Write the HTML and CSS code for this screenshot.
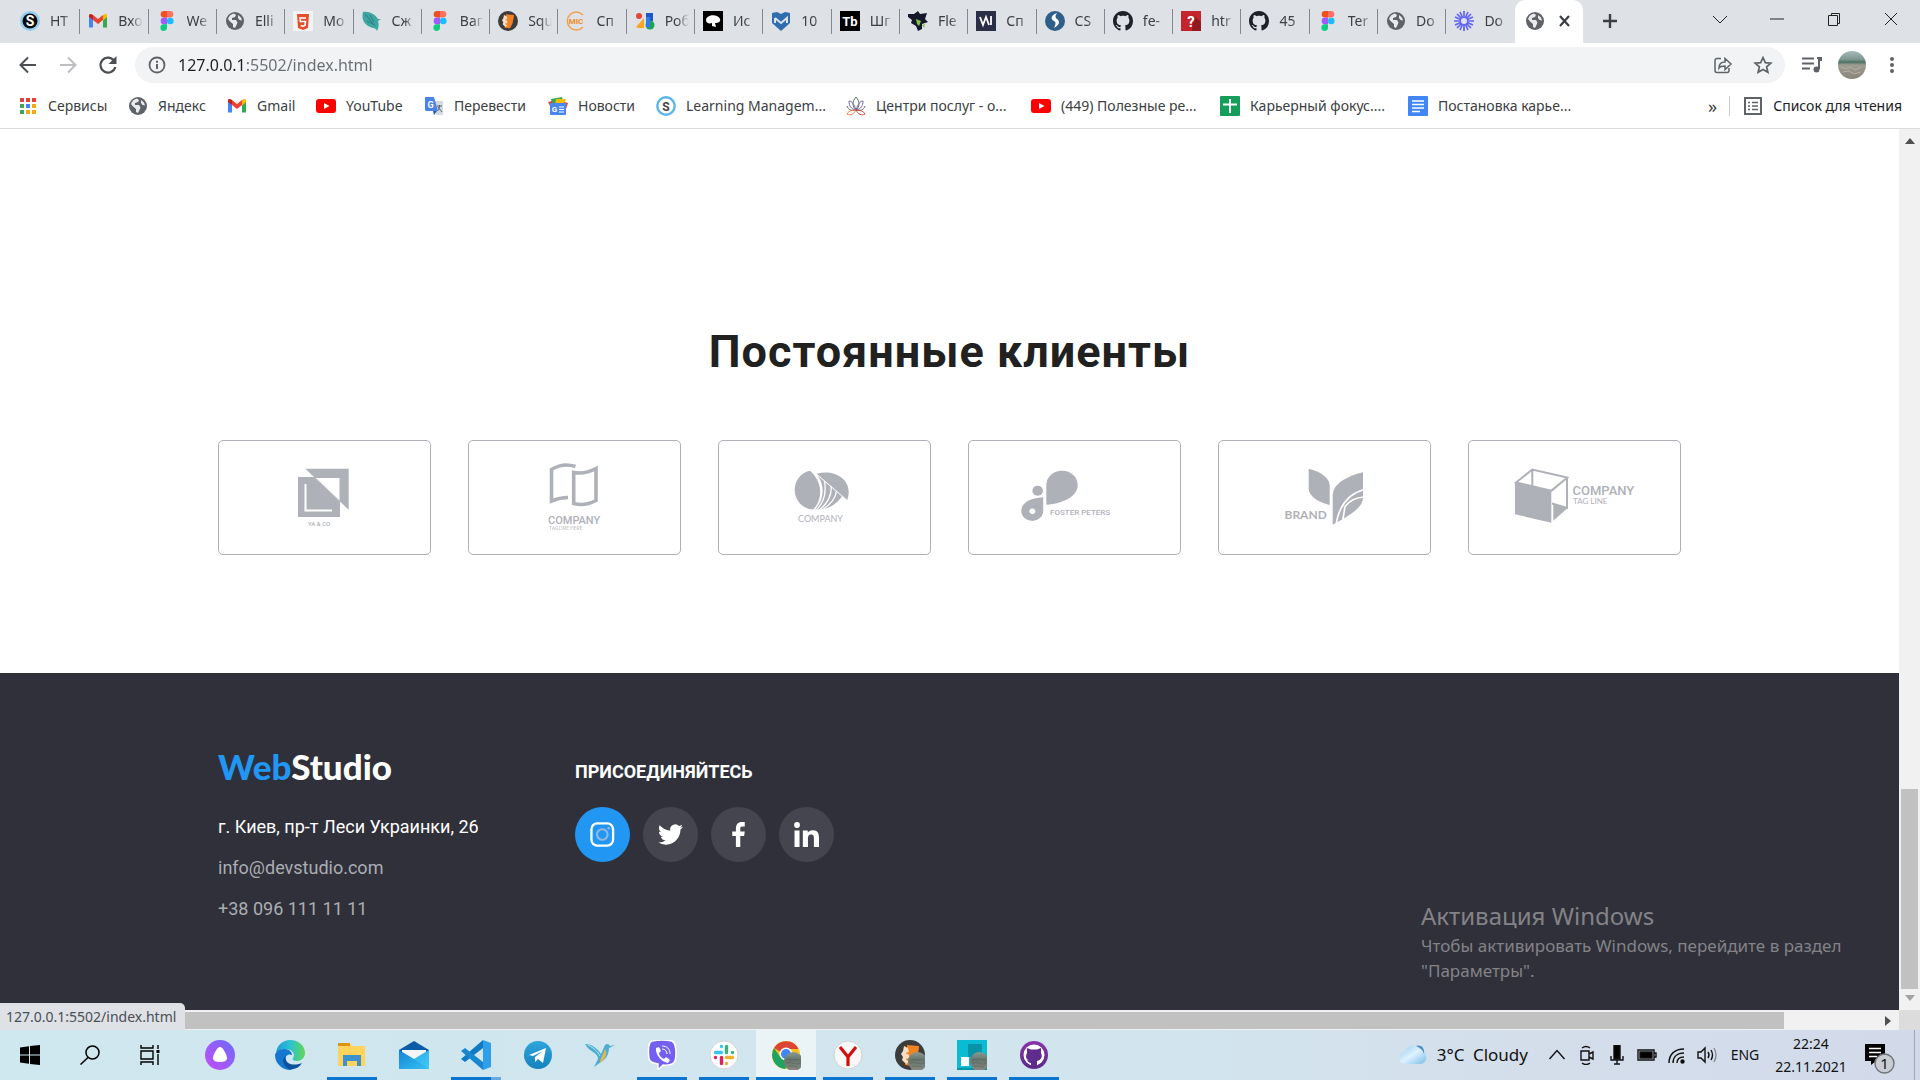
FILE: index.html
```html
<!DOCTYPE html>
<html lang="ru">
<head>
<meta charset="utf-8">
<title>WebStudio</title>
<link rel="stylesheet" href="styles.css">
</head>
<body>
<svg class="defs" aria-hidden="true">
  <defs>
    <linearGradient id="g-alice" x1="0" y1="1" x2="1" y2="0"><stop offset="0" stop-color="#c44dfb"/><stop offset="1" stop-color="#6b6bfa"/></linearGradient>
    <linearGradient id="g-edge" x1="0" y1="0" x2="1" y2="0"><stop offset="0" stop-color="#1f9bd8"/><stop offset=".5" stop-color="#2bc3d2"/><stop offset="1" stop-color="#62d84e"/></linearGradient>
    <linearGradient id="g-tg" x1="0" y1="0" x2="0" y2="1"><stop offset="0" stop-color="#2ea6dc"/><stop offset="1" stop-color="#1581bd"/></linearGradient>
    <linearGradient id="g-mail" x1="0" y1="0" x2="1" y2="1"><stop offset="0" stop-color="#1584d8"/><stop offset="1" stop-color="#35c1f1"/></linearGradient>
    <linearGradient id="g-sea" x1="0" y1="0" x2="0" y2="1"><stop offset="0" stop-color="#a9b9bb"/><stop offset=".3" stop-color="#7d9791"/><stop offset=".4" stop-color="#4d7263"/><stop offset=".5" stop-color="#a09d93"/><stop offset="1" stop-color="#888379"/></linearGradient>
    <linearGradient id="g-stone" x1="0" y1="0" x2="0" y2="1"><stop offset="0" stop-color="#8b9a94"/><stop offset=".4" stop-color="#66756c"/><stop offset="1" stop-color="#8b8981"/></linearGradient>
    <linearGradient id="g-cloud" x1="0" y1="0" x2="1" y2="1"><stop offset="0" stop-color="#8cc8ee"/><stop offset=".5" stop-color="#dff2fd"/><stop offset="1" stop-color="#73bdea"/></linearGradient>
    <linearGradient id="g-git" x1="0" y1="0" x2="0" y2="1"><stop offset="0" stop-color="#8a34ad"/><stop offset="1" stop-color="#5a2a86"/></linearGradient>
    <symbol id="globe" viewBox="0 0 20 20"><circle cx="10" cy="10" r="9" fill="#5f6368"/><path d="M3 8c1-3 3-5 6-5.5l2 1.5-1 2-3 1v2h4l1.500 2.500-1 2.500-1.500 3-2-1v-3l-3-2.500zM13 4l3 2.500 1 3-2.500-.5-1.500-2z" fill="#e8eaed"/></symbol>
    <symbol id="figma" viewBox="0 0 20 20"><path d="M7 0h3v6.600H7A3.300 3.300 0 0 1 7 0z" fill="#f24e1e"/><path d="M10 0h3a3.300 3.300 0 0 1 0 6.600h-3z" fill="#ff7262"/><path d="M7 6.600h3v6.700H7a3.300 3.300 0 0 1 0-6.700z" fill="#a259ff"/><circle cx="13.300" cy="10" r="3.300" fill="#1abcfe"/><path d="M7 13.300h3v3.300A3.300 3.300 0 1 1 7 13.300z" fill="#0acf83"/></symbol>
    <symbol id="gmail" viewBox="0 0 20 20"><path d="M1 4.500v12h4v-8z" fill="#4285f4"/><path d="M15 8.500v8h4v-12z" fill="#34a853"/><path d="M15 4.500v5l4-3.500V4.500C19 2.500 17 2.500 15 4z" fill="#fbbc04"/><path d="M5 9V4l5 4 5-4v5l-5 4z" fill="#ea4335"/><path d="M1 4.500C1 2.500 3 2.500 5 4v5L1 6z" fill="#c5221f"/></symbol>
    <symbol id="youtube" viewBox="0 0 20 20"><rect y="3" width="20" height="14" rx="3" fill="#f00"/><path d="M8 7l5.500 3L8 13z" fill="#fff"/></symbol>
    <symbol id="github" viewBox="0 0 16 16"><path d="M8 0C3.580 0 0 3.580 0 8c0 3.540 2.290 6.530 5.470 7.590.4.070.55-.17.55-.38 0-.19-.01-.82-.01-1.490-2.010.37-2.530-.49-2.690-.94-.09-.23-.48-.94-.82-1.130-.28-.15-.68-.52-.01-.53.63-.01 1.080.58 1.230.82.72 1.210 1.870.87 2.330.66.07-.52.28-.87.51-1.070-1.780-.2-3.640-.89-3.640-3.950 0-.87.31-1.590.82-2.150-.08-.2-.36-1.020.08-2.120 0 0 .67-.21 2.200.82.64-.18 1.320-.27 2-.27s1.360.09 2 .27c1.530-1.040 2.200-.82 2.200-.82.44 1.100.16 1.920.08 2.120.51.56.82 1.270.82 2.150 0 3.070-1.870 3.750-3.650 3.950.29.25.54.73.54 1.480 0 1.070-.01 1.930-.01 2.200 0 .21.15.46.55.38A8.010 8.010 0 0 0 16 8c0-4.420-3.580-8-8-8z"/></symbol>
    <symbol id="fox" viewBox="0 0 30 30"><circle cx="15" cy="15" r="15" fill="#3d3c3c"/><path d="M12 5l12 1c0 6-2 8-2 12l-4 8-8-1 2-7z" fill="#f58220"/><path d="M9 6l4 2 1 4-3 1 3 2v3l-3 1 3 3-3 2-4-4 1-3-2-3 2-3z" fill="#f8dfc4"/></symbol>
    <symbol id="photo" viewBox="0 0 20 20"><circle cx="10" cy="10" r="10" fill="url(#g-stone)"/><path d="M2 12q4-2 8 0t8-1M4 15q5-1 11 1M3 8h13" stroke="#50645a" fill="none" opacity=".6"/></symbol>
  </defs>
</svg>

<header class="browser">
  <div class="tabstrip">
    <nav class="tabs" aria-label="Вкладки">
      <button class="tab"><svg viewBox="0 0 20 20"><circle cx="10" cy="10" r="10" fill="#8fd0ef"/><circle cx="10" cy="10" r="7.500" fill="#0b0b0b"/><text x="10" y="15" class="mark" font-size="14" fill="#fff">S</text></svg><span>HT</span></button>
      <button class="tab"><svg><use href="#gmail"/></svg><span>Вхо</span></button>
      <button class="tab"><svg><use href="#figma"/></svg><span>We</span></button>
      <button class="tab"><svg><use href="#globe"/></svg><span>Elli</span></button>
      <button class="tab"><svg viewBox="0 0 20 20"><path fill="#f3f3f3" d="M0 0h20v20H0z"/><path d="M4 3h12l-1 14-5 2-5-2z" fill="#e5502c"/><path d="M13 7H7l.4 3.500h5l-.4 4-2 .7-2.300-.7" stroke="#fff" stroke-width="1.600" fill="none"/></svg><span>Мо</span></button>
      <button class="tab"><svg viewBox="0 0 20 20"><path d="M1 1c6-1 12 2 15 7l3 0-3 2c1 3 1 6-1 10-1-2-2-3-4-3C3 15-1 9 1 1z" fill="#3fa5a3"/><path d="M3 3l10 12M8 4l4 7M5 10l6 3" stroke="#2a7f80" fill="none"/></svg><span>Сж</span></button>
      <button class="tab"><svg><use href="#figma"/></svg><span>Ваг</span></button>
      <button class="tab"><svg><use href="#fox"/></svg><span>Squ</span></button>
      <button class="tab"><svg viewBox="0 0 20 20"><path d="M17 4a9 9 0 1 0 0 12" stroke="#f0a04b" fill="none" stroke-width="1.400"/><text x="10" y="13" class="mark" font-size="8" fill="#ef8d22">MIC</text></svg><span>Сп</span></button>
      <button class="tab"><svg viewBox="0 0 20 20"><circle cx="4" cy="5" r="3" fill="#e94335"/><path d="M1 16L9 7v10H3z" fill="#f6a623"/><path d="M11 2h7v8h-7z" fill="#1e56c9"/><circle cx="15" cy="14" r="4.500" fill="#22a15b"/><path d="M11 6h4v10h-4z" fill="#2b7de9"/></svg><span>Роб</span></button>
      <button class="tab"><svg viewBox="0 0 20 20"><path d="M0 0h20v20H0z"/><path d="M3 9c1-6 12-6 14-1 1 3-2 4-5 4l1 4-4-1v-3c-3 1-6 0-6-3z" fill="#fff"/></svg><span>Ис</span></button>
      <button class="tab"><svg viewBox="0 0 20 20"><path d="M1 2l5-1 4 2 4-2 5 1v10l-9 8-9-8z" fill="#2f6dae"/><path d="M4 7l6 5 6-5v5" stroke="#dee1e6" stroke-width="2" fill="none"/><path d="M4 7v5" stroke="#dee1e6" stroke-width="2"/></svg><span>10</span></button>
      <button class="tab"><svg viewBox="0 0 20 20"><path d="M0 0h20v20H0z"/><text x="10" y="15" class="mark" font-size="13" fill="#fff">Tb</text></svg><span>Шг</span></button>
      <button class="tab"><svg viewBox="0 0 20 20"><path d="M0 3l6 0 4-3 2 3 7-1-2 6 3 3-6 2 0 5-4 2-2-5-5-3 1-3-4-3z" fill="#15182b"/><path d="M8 8l5 2-2 5-2-2zM14 14l3-1-1 4z" fill="#86c440"/></svg><span>Fle</span></button>
      <button class="tab"><svg viewBox="0 0 20 20"><path d="M0 0h20v20H0z" fill="#2b2f45"/><path d="M4 6l3 8 3-8 3 8M15 5v9M10 6l3 8" stroke="#fff" stroke-width="1.800" fill="none"/></svg><span>Сп</span></button>
      <button class="tab"><svg viewBox="0 0 20 20"><circle cx="10" cy="10" r="10" fill="#2d5f88"/><path d="M12 2C6 4 5 8 9 10c2 1 2 3 0 7 6-3 6-7 3-9-2-1-2-3 0-6z" fill="#fff"/></svg><span>CS</span></button>
      <button class="tab"><svg fill="#1d2127"><use href="#github"/></svg><span>fe-</span></button>
      <button class="tab"><svg viewBox="0 0 20 20"><path d="M0 0h20v20H0z" fill="#c5242c"/><path d="M12 4l8 7v9h-9z" fill="#92191f"/><text x="10" y="16" class="mark" font-size="15" fill="#fff">?</text></svg><span>htr</span></button>
      <button class="tab"><svg fill="#1d2127"><use href="#github"/></svg><span>45</span></button>
      <button class="tab"><svg><use href="#figma"/></svg><span>Ter</span></button>
      <button class="tab"><svg><use href="#globe"/></svg><span>Do</span></button>
      <button class="tab"><svg viewBox="0 0 20 20"><path d="M10 0v20M0 10h20M3 3l14 14M17 3L3 17M6 1l8 18M14 1L6 19M1 6l18 8M1 14l18-8" stroke="#6262f0" stroke-width="1.700"/><circle cx="10" cy="10" r="3" fill="#dee1e6"/></svg><span>Do</span></button>
      <button class="tab active" aria-current="page" aria-label="Текущая вкладка"><svg><use href="#globe"/></svg><svg class="close" viewBox="0 0 20 20"><path d="M5 5l9 10M14 5L5 15" stroke="#3c4043" stroke-width="2.200"/></svg></button>
    </nav>
    <button class="newtab" aria-label="Новая вкладка"><svg viewBox="0 0 20 20"><path d="M10 3v14M3 10h14" stroke="#3c4043" stroke-width="2.400"/></svg></button>
    <div class="winbtns">
      <button aria-label="Поиск вкладок"><svg viewBox="0 0 20 20"><path d="M3 7l7 7 7-7"/></svg></button>
      <button aria-label="Свернуть"><svg viewBox="0 0 20 20"><path d="M3 10h14"/></svg></button>
      <button aria-label="Развернуть"><svg viewBox="0 0 20 20"><path d="M4.500 6.500h9v10h-9zM7.500 6V4.500h8v10H14"/></svg></button>
      <button aria-label="Закрыть"><svg viewBox="0 0 20 20"><path d="M4 4l12 12M16 4L4 16"/></svg></button>
    </div>
  </div>

  <div class="toolbar">
    <button aria-label="Назад"><svg viewBox="0 0 20 20"><path d="M18 10H3M10 2.500L2.500 10l7.500 7.500" stroke="#4b4f54" stroke-width="2" fill="none"/></svg></button>
    <button aria-label="Вперёд"><svg viewBox="0 0 20 20"><path d="M2 10h15M10 2.500l7.500 7.500-7.500 7.500" stroke="#bcbec1" stroke-width="2" fill="none"/></svg></button>
    <button aria-label="Обновить"><svg viewBox="0 0 20 20"><path d="M16 5.500A7.500 7.500 0 1 0 17.300 12" stroke="#4b4f54" stroke-width="2.200" fill="none"/><path d="M18.500 1v8h-8z" fill="#4b4f54"/></svg></button>
    <div class="omnibox">
      <svg viewBox="0 0 20 20"><circle cx="10" cy="10" r="7.500" stroke="#5f6368" stroke-width="1.800" fill="none"/><path d="M10 9v5M10 5.800v2" stroke="#5f6368" stroke-width="2"/></svg>
      <input type="text" aria-label="Адресная строка" value="127.0.0.1:5502/index.html">
      <button aria-label="Поделиться"><svg viewBox="0 0 20 20" stroke="#5f6368" stroke-width="1.500" fill="none"><path d="M8 3.500H4a2 2 0 0 0-2 2v10a2 2 0 0 0 2 2h10a2 2 0 0 0 2-2V13"/><path d="M6 13c0-4 2-6 6-6V3.500l6 5.500-6 5.500V11c-3 0-5 .5-6 2z"/></svg></button>
      <button aria-label="Добавить в закладки"><svg viewBox="0 0 20 20"><path d="M10 2.500l2.300 5.100 5.500.5-4.200 3.700 1.300 5.500-4.900-2.900-4.900 2.900 1.300-5.500L2.200 8.100l5.500-.5z" stroke="#5f6368" stroke-width="1.700" fill="none"/></svg></button>
    </div>
    <button aria-label="Управление медиа"><svg viewBox="0 0 20 20"><path d="M0 3.500h12M0 8.500h12M0 13.500h8" stroke="#5f6368" stroke-width="2"/><path d="M15 3h5v2h-3v9" fill="none" stroke="#5f6368" stroke-width="2"/><circle cx="14.500" cy="14.500" r="3" fill="#5f6368"/></svg></button>
    <button aria-label="Профиль"><svg class="avatar" viewBox="0 0 28 28"><circle cx="14" cy="14" r="14" fill="url(#g-sea)"/><path d="M3 16l5 2 4-2 5 3 6-3M5 21l6-1 5 3 7-2" stroke="#b5b0a5" fill="none"/></svg></button>
    <button aria-label="Меню"><svg viewBox="0 0 20 20" fill="#5f6368"><circle cx="10" cy="4" r="2"/><circle cx="10" cy="10" r="2"/><circle cx="10" cy="16" r="2"/></svg></button>
  </div>

  <div class="bookmarks">
    <nav class="marks" aria-label="Закладки">
      <a href="#"><svg viewBox="0 0 20 20"><path d="M2 2h4v4H2zM8 2h4v4H8zM14 2h4v4h-4z" fill="#e24236"/><path d="M2 8h4v4H2zM2 14h4v4H2z" fill="#3ba757"/><path d="M8 8h4v4H8z" fill="#4285f4"/><path d="M14 8h4v4h-4zM8 14h4v4H8zM14 14h4v4h-4z" fill="#f2a918"/></svg>Сервисы</a>
      <a href="#"><svg><use href="#globe"/></svg>Яндекс</a>
      <a href="#"><svg><use href="#gmail"/></svg>Gmail</a>
      <a href="#"><svg><use href="#youtube"/></svg>YouTube</a>
      <a href="#"><svg viewBox="0 0 20 20"><path d="M8 5h10l1 1v13h-7z" fill="#d5d8dc"/><path d="M1 1h9l4 14H2l-1-1z" fill="#4a83ec"/><path d="M13 15l-3 4-1-4z" fill="#2a56c6"/><text x="6.500" y="11.500" class="mark" font-size="9" fill="#fff">G</text><path d="M13 10h5M15.500 9v1c0 3-1 4-2 5M14 11l4 5" stroke="#5c6470" fill="none"/></svg>Перевести</a>
      <a href="#"><svg viewBox="0 0 20 20"><path d="M3 3l11-2 2 7H4z" fill="#34a853"/><path d="M8 3h10l-2 6H7z" fill="#fbbc04"/><path d="M0 6l4-1 1 5H2z" fill="#ea4335"/><path d="M16 6l4 1-2 6z" fill="#ea4335"/><rect x="2" y="7" width="16" height="12" rx="1" fill="#4a86ef"/><text x="6.500" y="16" class="mark" font-size="8" fill="#fff">G</text><path d="M11 11h5M11 13.500h5M11 16h5" stroke="#fff"/></svg>Новости</a>
      <a href="#"><svg viewBox="0 0 20 20"><circle cx="10" cy="10" r="8.700" fill="#fff" stroke="#5db5e8" stroke-width="2.400"/><text x="10" y="14.500" class="mark" font-size="12" fill="#444">S</text></svg>Learning Managem...</a>
      <a href="#"><svg viewBox="0 0 20 20" fill="none" stroke-width="1"><path d="M10 1c-4 5-4 9 0 13 4-4 4-8 0-13z" stroke="#55705d"/><path d="M3 5c0 5 2 8 7 9 5-1 7-4 7-9-3 0-5 3-7 9C8 8 6 5 3 5z" stroke="#7b68a8"/><path d="M1 10c1 4 5 5 9 4 4 1 8 0 9-4" stroke="#666"/><path d="M10 14c-3 0-8 1-9 4 4 2 7 0 9-4z" stroke="#e5803d"/><path d="M10 14c3 0 8 1 9 4-4 2-7 0-9-4z" stroke="#c94c44"/></svg>Центри послуг - о...</a>
      <a href="#"><svg><use href="#youtube"/></svg>(449) Полезные ре...</a>
      <a href="#"><svg viewBox="0 0 20 20"><rect width="20" height="20" rx="1" fill="#149e5a"/><path d="M10 3v14M3 8.500h14" stroke="#fff" stroke-width="2"/></svg>Карьерный фокус....</a>
      <a href="#"><svg viewBox="0 0 20 20"><rect width="20" height="20" rx="1" fill="#4285f4"/><path d="M4 5h12M4 8.500h12M4 12h12M4 15.500h8" stroke="#fff" stroke-width="1.700"/></svg>Постановка карье...</a>
    </nav>
    <button class="more" aria-label="Другие закладки">»</button>
    <a href="#" class="reading"><svg viewBox="0 0 20 20"><path d="M2 2h16v16H2z" fill="none" stroke="#5f6368" stroke-width="2"/><path d="M5 6.500h2M5 10h2M5 13.500h2M9 6.500h6M9 10h6M9 13.500h6" stroke="#5f6368" stroke-width="1.500"/></svg>Список для чтения</a>
  </div>
</header>

<div class="viewport">
  <div class="page">
    <main class="clients">
      <h1>Постоянные клиенты</h1>
      <ul class="cards">
        <li><a href="#" aria-label="YA &amp; CO"><svg viewBox="0 0 213 115"><path d="M80 37h42v40H80z"/><path d="M96.500 37.500H122v24z" fill="#fff"/><path d="M87.300 28.700h43.400v41z M98 38h23.500v22.400z" fill-rule="evenodd"/><path d="M87.500 44v26.500H114" stroke="#fff" stroke-width="2" fill="none"/><text x="90" y="86" font-size="6" class="r5">YA &amp; CO</text></svg></a></li>
        <li><a href="#" aria-label="Company"><svg viewBox="0 0 213 115"><path d="M107.500 26.500Q95 22.500 83.500 29.500V61Q92 57.500 100 57.500M105.700 32.500Q117 34.500 128 28.500V60.500Q117 66.500 105.700 63.500z" fill="none" stroke="#afb1b8" stroke-width="3.600"/><text x="80" y="84" font-size="11" class="r5">COMPANY</text><text x="81" y="90" font-size="5" opacity=".7" class="r5">TAGLINE HERE</text></svg></a></li>
        <li><a href="#" aria-label="Company"><svg viewBox="0 0 213 115"><path d="M92 30.700C82 33 76.700 41 76.700 50 76.700 61 85 69 95 69.500 105 60 105 42 92 30.700z"/><path d="M98.700 33.700C115 29 131 38 130.700 52c0 3-.5 5-1.400 8z"/><path d="M100 36l24 20.500C118 65 109 70.500 97 69.500 106 60 107 46 100 36z"/><path d="M98 70.500C107 62 108 50 106.500 41M100 71C111 63 114 53 113 46M102 71.500C114 64 118 56 118.500 51" fill="none" stroke="#fff" stroke-width="1.300"/><text x="80" y="81.500" font-size="9" class="lato">COMPANY</text></svg></a></li>
        <li><a href="#" aria-label="Foster Peters"><svg viewBox="0 0 213 115"><path d="M78.300 64.700V45C78.300 37 85 30.700 94 30.700s15.700 6.300 15.700 14.300C109.700 56 96 63.500 78.300 64.700z"/><ellipse cx="69.700" cy="50.700" rx="5.300" ry="5"/><path fill-rule="evenodd" d="M75.200 57.300V71a10.900 10 0 0 1-21.900 0C53.300 63 62 58 75.200 57.300zM64.300 68.500a3 2.800 0 1 0 .1 0z"/><text x="82" y="75" font-size="8" class="r5">FOSTER PETERS</text></svg></a></li>
        <li><a href="#" aria-label="Brand"><svg viewBox="0 0 213 115"><path d="M90.700 28.700c12 3 21 9 21 17V65c-12-3-21-9-21-16.500z"/><path d="M145 32.300V58c0 9-12 17-30.300 26.700V55C115 44 129 36 145 32.300z"/><path d="M118 85C121 65 130 54 146 49.500M124.500 82L127 66.500C132 60 138 57.500 146 57" fill="none" stroke="#fff" stroke-width="1.700"/><text x="66.500" y="78.700" font-size="12" class="lato bold">BRAND</text></svg></a></li>
        <li><a href="#" aria-label="Company"><svg viewBox="0 0 213 115"><path d="M47 42.300l36.300 8v32.400L47 74.300z"/><path d="M48 42.500l16.300-13 35 8-16 13.300zM64.300 30v15.500M99 38v30l-15-4.500" fill="none" stroke="#afb1b8" stroke-width="2"/><path d="M85.300 64l14.400 4-14.400 12.700z"/><text x="104.500" y="55" font-size="13" class="r5">COMPANY</text><text x="105" y="64" font-size="8" class="lato">TAG LINE</text></svg></a></li>
      </ul>
    </main>
    <footer class="footer">
      <div class="contacts">
        <a href="#" class="logo"><span>Web</span>Studio</a>
        <address>
          <p>г. Киев, пр-т Леси Украинки, 26</p>
          <a href="mailto:info@devstudio.com">info@devstudio.com</a>
          <a href="tel:+380961111111">+38 096 111 11 11</a>
        </address>
      </div>
      <div class="join">
        <h2>ПРИСОЕДИНЯЙТЕСЬ</h2>
        <ul class="social">
          <li><a href="#" class="on" aria-label="Instagram"><svg viewBox="0 0 26 26" fill="none"><rect x="1.500" y="1.500" width="22.500" height="23" rx="6" stroke="#fff" stroke-width="2.400"/><circle cx="12.800" cy="13" r="5.500" stroke="#94b9dc" stroke-width="2.200"/><circle cx="19.500" cy="6.500" r="1.400" fill="#94b9dc"/></svg></a></li>
          <li><a href="#" aria-label="Twitter"><svg viewBox="0 0 24 24" fill="#fff"><path d="M23.950 4.570a10 10 0 0 1-2.820.77 4.960 4.960 0 0 0 2.160-2.720c-.95.550-2 .95-3.130 1.180a4.920 4.920 0 0 0-8.380 4.480C7.690 8.090 4.070 6.130 1.640 3.160a4.820 4.820 0 0 0-.67 2.480c0 1.710.87 3.210 2.190 4.100a4.900 4.900 0 0 1-2.230-.62v.06a4.920 4.920 0 0 0 3.950 4.830 5 5 0 0 1-2.210.08 4.940 4.940 0 0 0 4.600 3.420A9.870 9.870 0 0 1 0 19.540a14 14 0 0 0 7.550 2.210c9.050 0 14-7.500 14-13.980 0-.21 0-.42-.02-.63.960-.69 1.800-1.560 2.460-2.550z"/></svg></a></li>
          <li><a href="#" aria-label="Facebook"><svg viewBox="0 0 24 24" fill="#fff"><path d="M9.500 24V13.500H6V9.200h3.500V6.500C9.500 2.500 11.500 0 15.300 0H18v4.200h-2.300c-1.600 0-2 .8-2 2.200v2.800H18l-.6 4.300h-3.700V24z"/></svg></a></li>
          <li><a href="#" aria-label="LinkedIn"><svg viewBox="0 0 24 24" fill="#fff"><path d="M.5 8.200h4.800V24H.5zM8.500 8.200h4.700v2.200c.8-1.500 2.500-2.600 4.900-2.600 4.800 0 5.900 3 5.900 7.500V24h-4.900v-7.700c0-1.900-.1-4.200-2.600-4.200-2.600 0-3.100 2-3.100 4.100V24H8.500z"/><circle cx="2.900" cy="2.900" r="2.800"/></svg></a></li>
        </ul>
      </div>
    </footer>
  </div>
  <div class="vscroll"><svg viewBox="0 0 10 6"><path d="M0 6l5-6 5 6z" fill="#505050"/></svg><div class="thumb"></div><svg viewBox="0 0 10 6"><path d="M0 0l5 6 5-6z" fill="#a3a3a3"/></svg></div>
  <div class="hscroll"><div class="thumb"></div><svg viewBox="0 0 6 10"><path d="M0 0l6 5-6 5z" fill="#505050"/></svg></div>
  <div class="corner"></div>
  <div class="status">127.0.0.1:5502/index.html</div>
  <aside class="activation"><strong>Активация Windows</strong><p>Чтобы активировать Windows, перейдите в раздел "Параметры".</p></aside>
</div>

<div class="taskbar">
  <nav class="apps" aria-label="Панель задач">
    <button aria-label="Пуск"><svg class="i20" viewBox="0 0 20 20"><path d="M0 2.500l9-1.300v8.300H0zM10 1l10-1v9.500H10zM0 10.500h9v8.300l-9-1.300zM10 10.500h10V20l-10-1z"/></svg></button>
    <button aria-label="Поиск"><svg class="i20" viewBox="0 0 20 20" fill="none" stroke="#000" stroke-width="1.500"><circle cx="12.500" cy="7.500" r="6.500"/><path d="M8 12.500L.5 19.500"/></svg></button>
    <button aria-label="Просмотр задач"><svg class="i20" viewBox="0 0 20 20" fill="none" stroke="#000" stroke-width="1.400"><path d="M1 0v3h12V0M1 20v-3h12v3M1 6h12v8H1zM18 0v4M18 9v11"/><path d="M16.500 5h3v3h-3z" fill="#000" stroke="none"/></svg></button>
    <button class="apart" aria-label="Алиса"><svg viewBox="0 0 30 30"><circle cx="15" cy="15" r="15" fill="url(#g-alice)"/><path d="M15 7c3 0 7 8 7 11s-3 4-7 4-7-1-7-4 4-11 7-11z" fill="#fff"/></svg></button>
    <button class="apart" aria-label="Microsoft Edge"><svg viewBox="0 0 30 30"><path d="M1 13C2 5 8 0 15 0c9 0 15 6 15 13 0 5-4 8-8 8-3 0-5-1-4-3 3-5-2-9-7-9C6 9 3 11 1 13z" fill="url(#g-edge)"/><path d="M0 15c1-4 5-6 10-6 4 0 7 3 7 6-4-2-8 2-7 6 1 5 4 8 8 9C8 31 0 24 0 15z" fill="#1577cf"/><path d="M11 16c-2 7 6 11 16 7-3 5-8 7-13 6-6-3-8-10-3-13z" fill="#0c519b"/></svg></button>
    <button class="open" aria-label="Проводник"><svg viewBox="0 0 30 30"><path d="M1 3h12l2 3h13v20H1z" fill="#ffd45c"/><path d="M1 3h12v3H1z" fill="#d9950f"/><path d="M6 15h18v11h-4v-5H10v5H6z" fill="#3f90cf"/></svg></button>
    <button aria-label="Почта"><svg viewBox="0 0 30 30"><path d="M0 10L15 1l15 9v6H0z" fill="#0b5da8"/><path d="M3 10h24v10H3z" fill="#f3f6f8"/><path d="M0 10l15 9 15-9v19H0z" fill="url(#g-mail)"/><path d="M15 19l15-9v19z" fill="#50d9ff" opacity=".35"/></svg></button>
    <button class="open more-windows" aria-label="Visual Studio Code"><svg viewBox="0 0 30 30"><path d="M22 0l8 3v24l-8 3z" fill="#2f9fea"/><path d="M22 0v8L4 22l-4-3z" fill="#0f79c4"/><path d="M22 30v-8L4 8l-4 3z" fill="#1787d0"/></svg></button>
    <button aria-label="Telegram"><svg viewBox="0 0 30 30"><circle cx="15" cy="15" r="14" fill="url(#g-tg)"/><path d="M6 15l17-7-3 15-5-4-3 3v-5l8-6-10 5z" fill="#fff"/></svg></button>
    <button aria-label="Колибри"><svg viewBox="0 0 30 30"><path d="M0 4c7 0 13 5 16 10l4-9c2-2 4-1 5 1l5-1-6 3c0 7-4 12-8 14l-7 5 4-8c0-7-8-6-13-15z" fill="#4badd2"/><path d="M20 9c3 4 0 11-5 14 0-4 3-8 5-14z" fill="#e5b84f"/><path d="M3 5c6 3 10 7 12 11" stroke="#b7e3ec" fill="none"/></svg></button>
    <button class="open" aria-label="Viber"><svg viewBox="0 0 30 30"><path d="M5 1q10-2 20 0 4 2 4 12t-4 11q-5 2-9 1l-5 5v-6q-8-1-9-5-2-16 3-18z" fill="#7360f2" stroke="#fff" stroke-width="1.500"/><path d="M9 8l3-1 2 4-2 2c0 3 3 5 5 6l2-2 4 3-2 3C15 22 8 15 9 8z" fill="#fff"/><path d="M15 6c5 0 8 3 8 8M15 9c3 0 5 2 5 5" stroke="#fff" fill="none"/></svg></button>
    <button class="open" aria-label="Slack"><svg viewBox="0 0 30 30"><circle cx="15" cy="15" r="14" fill="#fff" stroke="#d4d4d4"/><g fill="none" stroke-width="3.400" stroke-linecap="round"><path d="M12.500 6.500v0M6.500 12.500h6" stroke="#36c5f0"/><path d="M17.500 6.500v6M23.500 12.500v0" stroke="#2eb67d"/><path d="M17.500 17.500h6M17.500 23.500v0" stroke="#ecb22e"/><path d="M12.500 17.500v6M6.500 17.500v0" stroke="#e01e5a"/></g></svg></button>
    <button class="open current" aria-label="Google Chrome"><svg viewBox="0 0 30 30"><circle cx="15" cy="15" r="14" fill="#fbc116"/><path d="M15 15L3 8a14 14 0 0 1 24.500 1H15z" fill="#dc4437"/><path d="M3 8a14 14 0 0 0 11 21l5-10-9-1z" fill="#1ea362"/><circle cx="15" cy="14" r="6.500" fill="#fff"/><circle cx="15" cy="14" r="5" fill="#4285f4"/><use href="#photo" x="13" y="12" width="19" height="19"/></svg></button>
    <button class="open" aria-label="Яндекс Браузер"><svg viewBox="0 0 30 30"><circle cx="15" cy="15" r="14" fill="#f8f8f8" stroke="#d2d2d2"/><path d="M7 7l8 10 8-10M15 16v10" stroke="#d40d0d" stroke-width="3.200" fill="none"/></svg></button>
    <button class="open" aria-label="Squoosh"><svg viewBox="0 0 30 30"><use href="#fox"/><use href="#photo" x="13" y="12" width="19" height="19"/></svg></button>
    <button class="open" aria-label="PerfectPixel"><svg viewBox="0 0 30 30"><path d="M0 0h30v30H0z" fill="#09bcd4"/><path d="M11 4h14v13H11zM0 28h30v2H0z" fill="#0794a8"/><path d="M4 17h8v9H4z" fill="#fff"/><use href="#photo" x="13" y="12" width="19" height="19"/></svg></button>
    <button class="open" aria-label="GitHub Desktop"><svg viewBox="0 0 30 30"><circle cx="15" cy="15" r="14" fill="url(#g-git)"/><circle cx="15" cy="15" r="10.500" fill="#fff"/><path d="M8 8l4 1.500h6L22 8v5c2 4 0 7-4 8v5h-6v-3c-2 0-3-1-4-3l4 1c-5-1-6-4-4-8z" fill="#5f2b8c"/></svg></button>
  </nav>
  <div class="tray">
    <button class="weather"><svg viewBox="0 0 28 20"><path d="M6 19a6 6 0 0 1 0-12C8 0 15-1 18 2c5-2 9 2 8 6 3 4 1 10-4 11z" fill="url(#g-cloud)"/><path d="M17 1c5-2 9 2 8 8-1-4-4-6-8-8z" fill="#4a8fc9"/></svg>3°C&ensp;Cloudy</button>
    <button aria-label="Скрытые значки"><svg viewBox="0 0 20 20"><path d="M2.500 14L10 5.500l7.500 8.500"/></svg></button>
    <button aria-label="Камера"><svg viewBox="0 0 20 20"><path d="M4 6h8v9H4zM12 9l4-2v7l-4-2M5 3q4-3 8 0M5 18q4 3 8 0"/></svg></button>
    <button aria-label="Микрофон"><svg viewBox="0 0 20 20"><path d="M7 0h6v14H7z" fill="#000"/><path d="M4 11v4h12v-4M10 15v4M7 19h6"/></svg></button>
    <button aria-label="Батарея"><svg viewBox="0 0 20 20"><path d="M1 5h16v10H1zM17 8h2v4h-2"/><path d="M3 7h12v6H3z" fill="#000"/></svg></button>
    <button aria-label="Сеть"><svg viewBox="0 0 20 20"><path d="M2 18C2 9 8 4 17 4M6 18c0-6 4-10 11-10M10 18c0-4 3-6 7-6" /><circle cx="15.500" cy="16.500" r="1.500" fill="#000"/></svg></button>
    <button aria-label="Громкость"><svg viewBox="0 0 20 20"><path d="M1 7h3l4-4v14l-4-4H1zM11 7q2 3 0 6M14 5q3 5 0 10"/><path d="M17 3q4 7 0 14" opacity=".4"/></svg></button>
    <button class="lang">ENG</button>
    <time datetime="2021-11-22T22:24">22:24<br>22.11.2021</time>
    <button class="notes" aria-label="Уведомления"><svg viewBox="0 0 30 30"><path d="M0 0h20v17h-9l-5 4v-4H0z" fill="#000" stroke="none"/><path d="M4 4.500h12M4 8.500h12M4 12.500h8" stroke="#fff" stroke-width="1.500"/><circle cx="19.500" cy="19.500" r="9.500" fill="#c9ccd2" stroke="#6f7276"/><text x="19.500" y="25" class="count" font-size="15">1</text></svg></button>
  </div>
</div>
</body>
</html>
```
FILE: styles.css
```css
* { box-sizing: border-box; }
body {
  margin: 0;
  min-height: 100vh;
  display: flex;
  flex-direction: column;
  background: #fff;
  font: 14px/20px "Noto Sans", "Open Sans", sans-serif;
  color: #3c4043;
}
button { border: 0; padding: 0; background: none; font: inherit; color: inherit; display: flex; align-items: center; justify-content: center; }
a { color: inherit; text-decoration: none; }
ul { list-style: none; margin: 0; padding: 0; }
p { margin: 0; }
svg { display: block; width: 20px; height: 20px; flex: none; }
.defs { position: absolute; width: 0; height: 0; }
.mark { font-family: Roboto, sans-serif; font-weight: 700; text-anchor: middle; }

/* Tab strip */
.tabstrip { display: flex; height: 43px; padding-left: 12px; background: #dee1e6; }
.tabs { flex: 1; display: grid; grid-template-columns: repeat(23, minmax(0, 1fr)); }
.tab { justify-content: flex-start; gap: 10px; padding: 0 6px 2px 8px; overflow: hidden; background: linear-gradient(#85888c, #85888c) right 9px / 1px 25px no-repeat; }
.tab:nth-last-child(2) { background: none; }
.tab span { flex: 1; min-width: 0; overflow: hidden; white-space: nowrap; text-align: left; mask-image: linear-gradient(90deg, #000 50%, transparent); }
.tab.active { background: #fff; border-radius: 10px 10px 0 0; padding: 0 10px 2px; }
.newtab { width: 54px; padding-bottom: 2px; }
.winbtns { display: flex; width: 283px; padding: 0 1px 6px 54px; }
.winbtns button { flex: 1; }
.winbtns svg { fill: none; stroke: #222; }

/* Toolbar */
.toolbar { display: flex; align-items: center; height: 44px; padding: 0 8px; }
.toolbar > button { width: 40px; height: 40px; }
.omnibox { flex: 1; display: flex; align-items: center; height: 36px; margin: 0 7px; padding: 0 12px; border-radius: 18px; background: #f1f3f4; }
.omnibox input {
  flex: 1;
  min-width: 0;
  margin-left: 11px;
  padding: 0;
  border: 0;
  font: 16px/24px "Noto Sans", "Open Sans", sans-serif;
  color: transparent;
  background: linear-gradient(90deg, #202124 69px, #6a6e73 69px);
  background-clip: text;
}
.omnibox button { width: 20px; margin-left: 20px; }
.toolbar .avatar { width: 28px; height: 28px; }

/* Bookmarks */
.bookmarks { display: flex; align-items: center; height: 42px; padding: 0 18px 4px; border-bottom: 1px solid #dadce0; white-space: nowrap; }
.bookmarks a { display: flex; align-items: center; gap: 10px; }
.marks { flex: 1; display: grid; grid-template-columns: 110px 99px 89px 108px 124px 108px 190px 185px 189px 188px 1fr; }
.more { padding: 0 12px; font-size: 18px; }
.reading { padding-left: 13px; border-left: 1px solid #c8cacd; color: #202124; }

/* Browser window */
.viewport { flex: 1; position: relative; display: grid; grid-template-columns: minmax(0, 1fr) 21px; grid-template-rows: 1fr 20px; }
.page { display: flex; flex-direction: column; font-family: Roboto, sans-serif; }
.clients { padding: 196px 218px 118px; }
.clients h1 { margin: 0 0 62px; font-size: 45px; line-height: 53px; letter-spacing: 1px; text-align: center; color: #212121; }
.cards { display: grid; grid-template-columns: repeat(6, minmax(0, 1fr)); gap: 37px; }
.cards a { display: flex; justify-content: center; align-items: center; height: 115px; border: 1px solid #afb1b8; border-radius: 5px; overflow: hidden; }
.cards svg { width: 213px; height: 115px; fill: #afb1b8; }
.r5 { font-family: Roboto, sans-serif; font-weight: 500; }
.lato { font-family: Lato, sans-serif; }
.bold { font-weight: 700; }

.footer { flex: 1; display: grid; grid-template-columns: 357px 1fr; padding: 71px 218px 0; background: #2f303a; color: #fff; }
.logo { display: block; font: 900 35px/44px Lato, sans-serif; }
.logo span { color: #2196f3; }
address { display: flex; flex-direction: column; gap: 21px; margin-top: 29px; font-style: normal; font-size: 18px; line-height: 20px; }
address a { color: #acadb1; }
.join { padding-top: 18px; }
.join h2 { margin: 0 0 25px; font-size: 18px; line-height: 20px; }
.social { display: flex; gap: 13px; }
.social a { display: flex; align-items: center; justify-content: center; width: 55px; height: 55px; border-radius: 50%; background: #44454e; }
.social a.on { background: #2196f3; }
.social svg { width: 25px; height: 25px; }

.vscroll { display: flex; flex-direction: column; align-items: center; padding: 9px 0; background: #f1f1f1; }
.vscroll svg { width: 10px; height: 6px; }
.vscroll .thumb { width: 17px; height: 200px; margin: auto 0 6px; background: #c1c1c1; }
.hscroll { display: flex; align-items: center; padding: 2px 8px 1px 0; background: #f1f1f1; }
.hscroll .thumb { align-self: stretch; flex: 1; margin-right: 101px; background: #c1c1c1; }
.hscroll svg { width: 6px; height: 10px; }
.corner { background: #dcdcdc; }
.status { position: absolute; left: 0; bottom: 0; padding: 4px 9px 3px 6px; border-radius: 0 5px 0 0; background: #dee1e6; color: #4b4f53; }
.activation { position: absolute; right: 60px; bottom: 47px; width: 439px; font-size: 17px; line-height: 25px; color: #838387; }
.activation strong { display: block; font-size: 24px; line-height: 34px; font-weight: 400; }

/* Taskbar */
.taskbar { display: flex; justify-content: space-between; height: 50px; background: linear-gradient(90deg, #cfe7ef, #d2e5ee 60%, #d4deeb 80%, #d2dae9); color: #111; }
.apps { display: flex; }
.apps button { width: 60px; margin-right: 2px; border-bottom: 3px solid transparent; padding-top: 3px; }
.apps button:nth-child(-n+3) { margin-right: 0; }
.apps .apart { margin: 0 0 0 10px; }
.apps .apart + .open { margin-left: 2px; }
.apps svg { width: 30px; height: 30px; }
.apps .i20 { width: 20px; height: 20px; }
.apps .open { background: linear-gradient(#0b76d1, #0b76d1) center bottom / 50px 3px no-repeat border-box; }
.apps .more-windows { background: linear-gradient(90deg, #0b76d1 40px, #66a9e0 40px) center bottom / 50px 3px no-repeat border-box; }
.apps .current { background: #eaf4f7; border-color: #0b76d1; }
.tray { display: flex; align-items: center; padding-right: 5px; }
.tray button { width: 30px; height: 50px; }
.tray svg { fill: none; stroke: #111; stroke-width: 1.400; }
.tray .weather { width: auto; gap: 10px; margin-right: 14px; font-size: 17px; }
.tray .weather svg { width: 28px; stroke: none; }
.tray .lang { width: 46px; }
.tray time { width: 86px; padding: 0 1px; line-height: 23px; text-align: center; }
.tray .notes { width: 61px; padding: 8px 16px 0 8px; border-right: 1px solid #9fa9b6; }
.tray .notes svg { width: 30px; height: 30px; }
.tray .count { fill: #111; stroke: none; text-anchor: middle; }
```
